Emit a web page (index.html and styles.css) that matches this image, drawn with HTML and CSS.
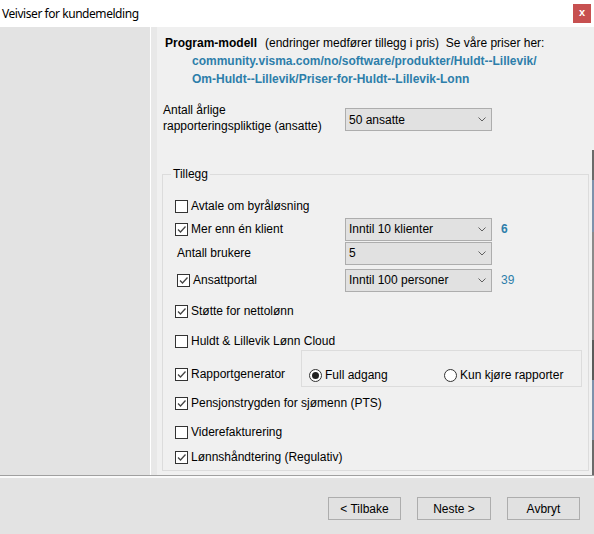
FILE: index.html
```html
<!DOCTYPE html>
<html lang="no">
<head>
<meta charset="utf-8">
<title>Veiviser for kundemelding</title>
<link rel="stylesheet" href="styles.css">
</head>
<body>
<div class="window">
  <header class="titlebar">
    <span class="title">Veiviser for kundemelding</span>
    <button class="close" type="button">x</button>
  </header>
  <div class="main">
    <aside class="side"></aside>
    <div class="strip"></div>
    <section class="content">
      <div class="model-head"><b>Program-modell</b><span class="note">(endringer medfører tillegg i pris)  Se våre priser her:</span></div>
      <div class="links">
        <a href="#">community.visma.com/no/software/produkter/Huldt--Lillevik/</a>
        <a href="#">Om-Huldt--Lillevik/Priser-for-Huldt--Lillevik-Lonn</a>
      </div>
      <div class="model-row">
        <div class="model-label">Antall årlige<br>rapporteringspliktige (ansatte)</div>
        <div class="select"><span>50 ansatte</span><svg class="chev" width="8" height="5" viewBox="0 0 8 5"><polyline points="0.5,0.5 4,4 7.5,0.5" fill="none" stroke="#606060" stroke-width="1"/></svg></div>
      </div>

      <div class="group">
        <span class="group-title">Tillegg</span>

        <div class="row">
          <label class="check"><span class="box"></span>Avtale om byråløsning</label>
        </div>

        <div class="row tall mt1">
          <label class="check col"><span class="box"><svg width="11" height="11" viewBox="0 0 11 11"><polyline points="2,5.5 4.5,8 9.5,2.5" fill="none" stroke="#444" stroke-width="1.3"/></svg></span>Mer enn én klient</label>
          <div class="select"><span>Inntil 10 klienter</span><svg class="chev" width="8" height="5" viewBox="0 0 8 5"><polyline points="0.5,0.5 4,4 7.5,0.5" fill="none" stroke="#606060" stroke-width="1"/></svg></div>
          <span class="num strong">6</span>
        </div>

        <div class="row tall">
          <span class="plain col indent">Antall brukere</span>
          <div class="select"><span>5</span><svg class="chev" width="8" height="5" viewBox="0 0 8 5"><polyline points="0.5,0.5 4,4 7.5,0.5" fill="none" stroke="#606060" stroke-width="1"/></svg></div>
        </div>

        <div class="row tall mt3">
          <label class="check col indent"><span class="box"><svg width="11" height="11" viewBox="0 0 11 11"><polyline points="2,5.5 4.5,8 9.5,2.5" fill="none" stroke="#444" stroke-width="1.3"/></svg></span>Ansattportal</label>
          <div class="select"><span>Inntil 100 personer</span><svg class="chev" width="8" height="5" viewBox="0 0 8 5"><polyline points="0.5,0.5 4,4 7.5,0.5" fill="none" stroke="#606060" stroke-width="1"/></svg></div>
          <span class="num">39</span>
        </div>

        <div class="row mt9">
          <label class="check"><span class="box"><svg width="11" height="11" viewBox="0 0 11 11"><polyline points="2,5.5 4.5,8 9.5,2.5" fill="none" stroke="#444" stroke-width="1.3"/></svg></span>Støtte for nettolønn</label>
        </div>

        <div class="row short mt11">
          <label class="check"><span class="box"></span>Huldt &amp; Lillevik Lønn Cloud</label>
        </div>

        <div class="row report">
          <label class="check report-label"><span class="box"><svg width="11" height="11" viewBox="0 0 11 11"><polyline points="2,5.5 4.5,8 9.5,2.5" fill="none" stroke="#444" stroke-width="1.3"/></svg></span>Rapportgenerator</label>
          <div class="radio-box">
            <label class="radio-item first"><span class="radio on"></span>Full adgang</label>
            <label class="radio-item"><span class="radio"></span>Kun kjøre rapporter</label>
          </div>
        </div>

        <div class="row mt6">
          <label class="check"><span class="box"><svg width="11" height="11" viewBox="0 0 11 11"><polyline points="2,5.5 4.5,8 9.5,2.5" fill="none" stroke="#444" stroke-width="1.3"/></svg></span>Pensjonstrygden for sjømenn (PTS)</label>
        </div>

        <div class="row mt9">
          <label class="check"><span class="box"></span>Viderefakturering</label>
        </div>

        <div class="row mt5">
          <label class="check"><span class="box"><svg width="11" height="11" viewBox="0 0 11 11"><polyline points="2,5.5 4.5,8 9.5,2.5" fill="none" stroke="#444" stroke-width="1.3"/></svg></span>Lønnshåndtering (Regulativ)</label>
        </div>
      </div>
    </section>
    <div class="edge"></div>
  </div>
  <footer class="footer">
    <button class="btn" type="button">&lt; Tilbake</button>
    <button class="btn wide" type="button">Neste &gt;</button>
    <button class="btn" type="button">Avbryt</button>
  </footer>
</div>
</body>
</html>
```
FILE: styles.css
```css
html, body {
  margin: 0;
  padding: 0;
}
body {
  width: 594px;
  height: 534px;
  overflow: hidden;
  font: 12px/14px "Liberation Sans", Arial, sans-serif;
  color: #000;
  background: #f0f0f0;
}
.window {
  display: flex;
  flex-direction: column;
  height: 534px;
}

/* title bar */
.titlebar {
  flex: none;
  height: 27px;
  background: #fff;
  display: flex;
  align-items: center;
  justify-content: space-between;
  padding: 0 3px 0 2px;
}
.title {
  font: 12px/16px "Noto Sans", "Segoe UI", sans-serif;
  letter-spacing: -0.45px;
  color: #000;
}
.close {
  width: 18px;
  height: 19px;
  padding: 0 0 2px 0;
  border: 0;
  background: #c75050;
  color: #fff;
  font: bold 11px/17px "Liberation Sans", Arial, sans-serif;
}

/* main area */
.main {
  flex: none;
  height: 448px;
  display: flex;
}
.side {
  width: 150px;
  background: #e3e3e3;
  border-right: 1px solid #fff;
}
.strip {
  width: 6px;
  background: #e8e8e8;
}
.content {
  flex: 1;
  background: #f0f0f0;
  padding: 7px 0 0 5px;
}
.edge {
  width: 2px;
  background: linear-gradient(to bottom,
    #f0f0f0 0, #f0f0f0 123px,
    #6a6a6a 123px, #6a6a6a 153px,
    #7d91ab 153px, #7d91ab 205px,
    #8a8a8a 205px, #8a8a8a 313px,
    #5a5a5a 313px, #5a5a5a 353px,
    #7d91ab 353px, #7d91ab 413px,
    #6a6a6a 413px);
}

.model-head {
  padding-left: 3px;
  line-height: 18px;
}
.note {
  margin-left: 8px;
  white-space: pre;
}
.links {
  padding-left: 30px;
  display: flex;
  flex-direction: column;
  line-height: 18px;
  font-weight: bold;
}
.links a {
  color: #2d7eaa;
  text-decoration: none;
}
.model-row {
  display: flex;
  align-items: flex-start;
  margin-top: 14px;
}
.model-label {
  margin-left: 1px;
  width: 182px;
  line-height: 16px;
}
.model-row .select {
  margin-top: 6px;
}

/* combo box */
.select {
  box-sizing: border-box;
  width: 147px;
  height: 23px;
  border: 1px solid #adadad;
  background: #e1e1e1;
  display: flex;
  align-items: center;
  justify-content: space-between;
  padding: 0 5px 0 3px;
}
.chev {
  display: block;
}

/* group box */
.group {
  position: relative;
  box-sizing: border-box;
  width: 427px;
  height: 297px;
  margin-top: 40px;
  border: 1px solid #dcdcdc;
  padding: 21px 0 0 12px;
  display: flex;
  flex-direction: column;
}
.group-title {
  position: absolute;
  top: -8px;
  left: 8px;
  padding: 0 2px;
  background: #f0f0f0;
  line-height: 14px;
}

.row {
  flex: none;
  display: flex;
  align-items: center;
  height: 20px;
}
.row.tall { height: 24px; }
.row.short { height: 18px; }
.mt1 { margin-top: 1px; }
.mt3 { margin-top: 3px; }
.mt5 { margin-top: 5px; }
.mt6 { margin-top: 6px; }
.mt9 { margin-top: 9px; }
.mt11 { margin-top: 11px; }

.check {
  display: flex;
  align-items: center;
  gap: 3px;
  line-height: 14px;
}
.col { width: 170px; }
.col.indent {
  margin-left: 2px;
  width: 168px;
}
.box {
  box-sizing: border-box;
  width: 13px;
  height: 13px;
  border: 1px solid #333;
  background: #fff;
  display: flex;
  align-items: center;
  justify-content: center;
}
.box svg { display: block; }

.num {
  margin-left: 9px;
  color: #2d7eaa;
}
.num.strong { font-weight: bold; }

.row.report {
  height: 37px;
  align-items: flex-start;
}
.report-label {
  margin-top: 17px;
  width: 126px;
}
.radio-box {
  box-sizing: border-box;
  width: 281px;
  height: 37px;
  border: 1px solid #dcdcdc;
  padding: 17px 0 0 7px;
  display: flex;
  align-items: flex-start;
}
.radio-item {
  display: flex;
  align-items: center;
  gap: 3px;
  line-height: 14px;
}
.radio-item.first { width: 135px; }
.radio {
  box-sizing: border-box;
  width: 13px;
  height: 13px;
  border: 1px solid #333;
  border-radius: 50%;
  background: #fff;
  display: flex;
  align-items: center;
  justify-content: center;
}
.radio.on::after {
  content: "";
  width: 7px;
  height: 7px;
  border-radius: 50%;
  background: #222;
}

/* footer */
.footer {
  flex: 1;
  background: #e3e3e3;
  border-top: 1px solid #a0a0a0;
  box-shadow: inset 0 2px 0 #fafafa;
  display: flex;
  justify-content: flex-end;
  align-items: flex-start;
  gap: 16px;
  padding: 21px 14px 0 0;
}
.btn {
  box-sizing: border-box;
  width: 73px;
  height: 23px;
  padding: 0;
  border: 1px solid #adadad;
  background: #e1e1e1;
  color: #000;
  font: 12px/14px "Liberation Sans", Arial, sans-serif;
}
.btn.wide { width: 74px; }
```
